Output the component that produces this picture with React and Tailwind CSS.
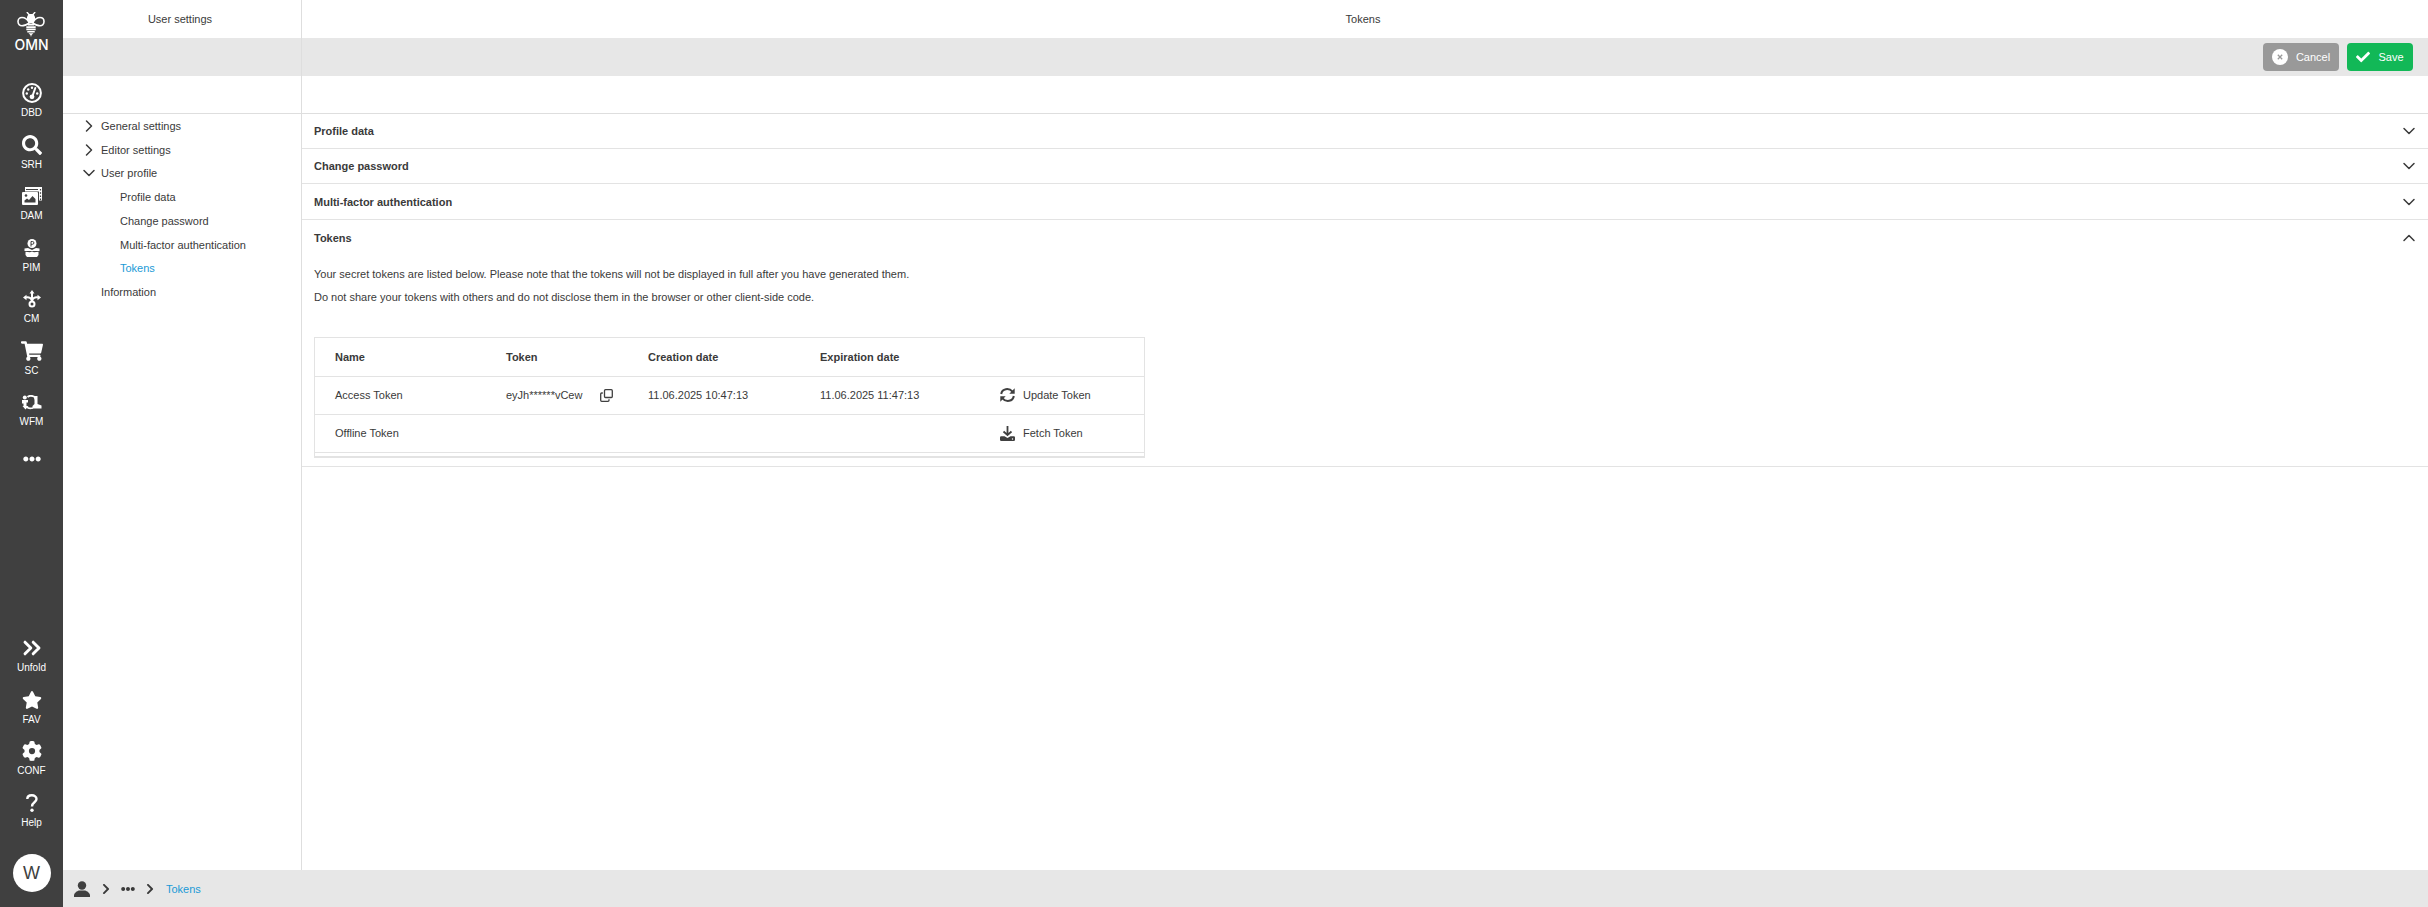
import React from "react";
import {
  FaCheck,
  FaChevronRight,
  FaEllipsisH,
  FaSearch,
  FaShoppingCart,
  FaStar,
} from "react-icons/fa";
import { FaGear } from "react-icons/fa6";
import { ChevronDown, ChevronRight, ChevronUp, ChevronsRight } from "lucide-react";

const BeeLogo = () => (
  <svg viewBox="0 0 28 25" className="h-[25px] w-7" fill="none" stroke="white">
    <path d="M10.200 0.600 L12 2.500 M17.800 0.600 L16 2.500" strokeWidth="1.400" strokeLinecap="round" />
    <path d="M11.500 2 h5 l1.500 3 v3 l-2 3.500 h-4 l-2 -3.500 v-3z" fill="white" stroke="none" />
    <path d="M12.500 11 C10 6.500 7.500 5.500 5 5.500 C2.500 5.500 1 7.300 1 9.600 C1 12 2.800 13.800 5 13.800 C7.500 13.800 10 12.500 12.500 11" strokeWidth="1.600" />
    <path d="M15.500 11 C18 6.500 20.500 5.500 23 5.500 C25.500 5.500 27 7.300 27 9.600 C27 12 25.200 13.800 23 13.800 C20.500 13.800 18 12.500 15.500 11" strokeWidth="1.600" />
    <path d="M10.800 12.800 h6.400 M9.300 15.100 h9.400 M9.300 17.400 h9.400 M10.300 19.700 h7.400" strokeWidth="1.600" />
    <path d="M11.500 21.200 h5 L14.600 23 L14 25 L13.400 23z" fill="white" stroke="none" />
  </svg>
);

const DashboardIcon = () => (
  <svg viewBox="0 0 20 20" className="size-5" fill="white">
    <circle cx="10" cy="10" r="8.900" fill="none" stroke="white" strokeWidth="2" />
    <circle cx="4.800" cy="10.500" r="1.200" />
    <circle cx="6.200" cy="6.500" r="1.200" />
    <circle cx="10" cy="4.700" r="1.200" />
    <circle cx="15.200" cy="10.500" r="1.200" />
    <path d="M13.300 5 L10.500 13" stroke="white" strokeWidth="2" strokeLinecap="round" />
    <circle cx="10" cy="13.800" r="2.400" />
  </svg>
);

const AssetsIcon = () => (
  <svg viewBox="0 0 20 18" className="h-[18px] w-5">
    <path d="M3 0 H20 V13.500 H17 V4.500 H3z" fill="white" />
    <path d="M18.500 2 V13" stroke="#404040" strokeWidth="1.200" strokeDasharray="1.500 1.700" />
    <path d="M4 2.500 H16" stroke="#404040" strokeWidth="1" />
    <rect y="5" width="16" height="13" rx="1" fill="white" />
    <circle cx="4" cy="8.500" r="1.300" fill="#404040" />
    <path d="M2.500 15.500 V13.500 L5 11.500 L7 13 L10.500 9 L13.500 12 V15.500z" fill="#404040" />
  </svg>
);

const ProductIcon = () => (
  <svg viewBox="0 0 16 18" className="h-[18px] w-4">
    <circle cx="8" cy="4.500" r="4.500" fill="white" />
    <path d="M7 7.500 V2.500 H8.500 a1.300 1.300 0 0 1 0 2.800 H7" fill="none" stroke="#404040" strokeWidth="1" />
    <path d="M0.500 9.500 L4 9 L8 11 L12 9 L15.500 9.500 V12 H0.500z" fill="white" />
    <path d="M1.500 12.800 L6 13.300 L8 12.500 L10 13.300 L14.500 12.800 V16 L13 18 H3 L1.500 16z" fill="white" />
  </svg>
);

const ChannelIcon = () => (
  <svg viewBox="0 0 18 18" className="size-[18px]" fill="none" stroke="white" strokeWidth="2">
    <path d="M9 3 V11" />
    <path d="M3 7.500 C6 6.500 8.500 8.500 9 11 C9.500 8.500 12 6.500 15 7.500" />
    <circle cx="9" cy="14" r="2.500" />
    <path d="M9 0 L11.500 3.500 H6.500z M0 7.500 L3.500 4.800 V10.200z M18 7.500 L14.500 4.800 V10.200z" fill="white" stroke="none" />
  </svg>
);

const WorkflowIcon = () => (
  <svg viewBox="0 0 20 15" className="h-[15px] w-5">
    <g fill="white">
      <circle cx="2.800" cy="2.500" r="2" />
      <path d="M0 5 H6 V7.500 H4.500 V11 H6.500 L3.500 14.500 L0.500 11 H1.500 V8.500 H0z" />
      <path d="M11.500 1 H15.500 V9 L19.500 10.500 V13.500 H10.500 V11 L12.500 9 V5z" />
    </g>
    <path d="M5.500 2 C7 0.700 10 0.500 12.500 1.800 M5 12 C6 13.500 8 13.800 11 13" fill="none" stroke="white" strokeWidth="1.800" />
  </svg>
);

const HelpIcon = () => (
  <svg viewBox="0 0 12 18" className="h-[18px] w-3" fill="none" stroke="white" strokeWidth="2.400">
    <path d="M1.300 5 C1.300 2.500 3.300 1.300 5.800 1.300 C8.500 1.300 10.500 2.800 10.500 5 C10.500 8.500 6 8 6 12.500" />
    <circle cx="6" cy="16.200" r="1.700" fill="white" stroke="none" />
  </svg>
);

const CancelIcon = () => (
  <svg viewBox="0 0 16 16" className="size-4">
    <circle cx="8" cy="8" r="8" fill="white" />
    <path d="M5.800 5.800 L10.200 10.200 M10.200 5.800 L5.800 10.200" stroke="#999999" strokeWidth="1.300" />
  </svg>
);

const CopyIcon = () => (
  <svg viewBox="0 0 13 13" className="size-[13px]" fill="none" stroke="#404040" strokeWidth="1.300">
    <rect x="4.500" y="0.700" width="7.800" height="7.800" rx="1" />
    <path d="M2.800 4 H1.700 a1 1 0 0 0 -1 1 V11.300 a1 1 0 0 0 1 1 H8 a1 1 0 0 0 1 -1 V10.200" />
  </svg>
);

const UpdateIcon = () => (
  <svg viewBox="0 0 15 14" className="h-3.5 w-[15px]" fill="none" stroke="#404040" strokeWidth="2">
    <path d="M1.200 6 C2 0.500 9 -0.500 12.500 3.700" />
    <path d="M13.800 8 C13 13.500 6 14.500 2.500 10.300" />
    <path d="M14.700 0.300 V5.700 H9.300z M0.300 13.700 V8.300 H5.700z" fill="#404040" stroke="none" />
  </svg>
);

const FetchIcon = () => (
  <svg viewBox="0 0 15 15" className="size-[15px]">
    <path d="M7.500 0 V8.500 M3.500 5.500 L7.500 9 L11.500 5.500" fill="none" stroke="#404040" strokeWidth="1.800" />
    <path d="M0 11.500 a1.200 1.200 0 0 1 1.200 -1.200 H4.500 L7.500 12 L10.500 10.300 H13.800 a1.200 1.200 0 0 1 1.200 1.200 V13.800 a1.200 1.200 0 0 1 -1.200 1.200 H1.200 a1.200 1.200 0 0 1 -1.200 -1.200z" fill="#404040" />
    <circle cx="12.500" cy="13" r="0.700" fill="white" />
  </svg>
);

const UserIcon = () => (
  <svg viewBox="0 0 16 16" className="size-4" fill="#404040">
    <circle cx="8" cy="4.500" r="4.200" />
    <path d="M0 16 V14 C1 10.800 4 9.800 5.500 9.600 H10.500 C12 9.800 15 10.800 16 14 V16z" />
  </svg>
);

const modules = [
  { label: "DBD", icon: <DashboardIcon /> },
  { label: "SRH", icon: <FaSearch className="size-5" /> },
  { label: "DAM", icon: <AssetsIcon /> },
  { label: "PIM", icon: <ProductIcon /> },
  { label: "CM", icon: <ChannelIcon /> },
  { label: "SC", icon: <FaShoppingCart className="h-5 w-[22px]" /> },
  { label: "WFM", icon: <WorkflowIcon /> },
];

const tools = [
  { label: "Unfold", icon: <ChevronsRight className="size-7" strokeWidth={2.5} /> },
  { label: "FAV", icon: <FaStar className="size-5" /> },
  { label: "CONF", icon: <FaGear className="size-5" /> },
  { label: "Help", icon: <HelpIcon /> },
];

const RailButton = ({ label, icon }) => (
  <button type="button" className="flex w-full flex-col items-center text-white">
    <span className="flex h-6 w-7 items-center justify-center">{icon}</span>
    <span className="mt-0.5 text-[10px] leading-3">{label}</span>
  </button>
);

const Rail = () => (
  <aside className="flex w-[63px] shrink-0 flex-col items-center bg-[#404040] text-white">
    <a href="#" className="mt-3 flex flex-col items-center">
      <BeeLogo />
      <span className="font-['Inter',sans-serif] text-sm leading-4 font-medium">OMN</span>
    </a>
    <nav className="mt-7 grid h-[361px] w-full grid-rows-7">
      {modules.map((item) => (
        <RailButton key={item.label} {...item} />
      ))}
    </nav>
    <button type="button" aria-label="More modules" className="mt-2">
      <FaEllipsisH className="size-[18px]" />
    </button>
    <nav className="mt-auto grid h-[206px] w-full grid-rows-4">
      {tools.map((item) => (
        <RailButton key={item.label} {...item} />
      ))}
    </nav>
    <button
      type="button"
      className="mt-3 mb-[15px] size-[38px] rounded-full bg-white text-lg text-[#404040]"
    >
      W
    </button>
  </aside>
);

const TreeItem = ({ label, icon }) => (
  <button type="button" className="flex items-center text-left">
    <span className="flex w-6 justify-center">{icon}</span>
    {label}
  </button>
);

const SettingsTree = () => (
  <nav className="grid h-[190px] grid-rows-8 pl-[14px]">
    <TreeItem label="General settings" icon={<ChevronRight className="size-5" strokeWidth={1.8} />} />
    <TreeItem label="Editor settings" icon={<ChevronRight className="size-5" strokeWidth={1.8} />} />
    <TreeItem label="User profile" icon={<ChevronDown className="size-5" strokeWidth={1.8} />} />
    <a href="#profile" className="flex items-center pl-[43px]">Profile data</a>
    <a href="#password" className="flex items-center pl-[43px]">Change password</a>
    <a href="#mfa" className="flex items-center pl-[43px]">Multi-factor authentication</a>
    <a href="#tokens" className="flex items-center pl-[43px] text-[#1b9ad6]">Tokens</a>
    <a href="#information" className="flex items-center pl-6">Information</a>
  </nav>
);

const SectionHeader = ({ title, open }) => (
  <button
    type="button"
    aria-expanded={open}
    className="flex h-[35px] w-full items-center justify-between pr-[9px] pl-3 font-bold"
  >
    {title}
    {open ? (
      <ChevronUp className="size-5" strokeWidth={1.8} />
    ) : (
      <ChevronDown className="size-5" strokeWidth={1.8} />
    )}
  </button>
);

const TokenTable = () => (
  <div className="mt-7 ml-3 w-[831px] border border-b-2 border-[#e3e3e3] pb-[3px]">
    <table className="w-full table-fixed border-collapse text-left">
      <colgroup>
        <col className="w-[191px]" />
        <col className="w-[142px]" />
        <col className="w-[172px]" />
        <col className="w-[180px]" />
        <col />
      </colgroup>
      <thead>
        <tr className="h-[38px] border-b border-[#e3e3e3]">
          <th className="pl-5">Name</th>
          <th>Token</th>
          <th>Creation date</th>
          <th>Expiration date</th>
          <td></td>
        </tr>
      </thead>
      <tbody>
        <tr className="h-[38px] border-b border-[#e3e3e3]">
          <td className="pl-5">Access Token</td>
          <td>
            <span className="flex items-center gap-[18px]">
              eyJh******vCew
              <button type="button" aria-label="Copy token">
                <CopyIcon />
              </button>
            </span>
          </td>
          <td>11.06.2025 10:47:13</td>
          <td>11.06.2025 11:47:13</td>
          <td>
            <button type="button" className="flex items-center gap-2">
              <UpdateIcon />
              Update Token
            </button>
          </td>
        </tr>
        <tr className="h-[38px] border-b border-[#e3e3e3]">
          <td className="pl-5">Offline Token</td>
          <td></td>
          <td></td>
          <td></td>
          <td>
            <button type="button" className="flex items-center gap-2">
              <FetchIcon />
              Fetch Token
            </button>
          </td>
        </tr>
      </tbody>
    </table>
  </div>
);

const App = () => {
  return (
    <div className="flex min-h-screen bg-white font-['Liberation_Sans',Arial,sans-serif] text-[11px] leading-4 text-[#3a3a3a]">
      <Rail />
      <div className="flex min-w-0 flex-1 flex-col">
        <div className="flex flex-1">
          <section className="flex w-[239px] shrink-0 flex-col border-r border-[#dedede]">
            <h2 className="flex h-[38px] items-center justify-center pr-1">User settings</h2>
            <div className="h-[38px] bg-[#e7e7e7]"></div>
            <div className="h-[38px] border-b border-[#dedede]"></div>
            <SettingsTree />
          </section>
          <main className="min-w-0 flex-1">
            <h1 className="flex h-[38px] items-center justify-center pr-1">Tokens</h1>
            <div className="flex h-[38px] items-center justify-end gap-2 bg-[#e7e7e7] pr-[15px] text-white">
              <button
                type="button"
                className="flex h-7 w-[76px] items-center justify-center gap-2 rounded bg-[#999999]"
              >
                <CancelIcon />
                Cancel
              </button>
              <button
                type="button"
                className="flex h-7 w-[66px] items-center justify-center gap-2 rounded bg-[#12b857]"
              >
                <FaCheck className="size-[14px]" />
                Save
              </button>
            </div>
            <div className="h-[38px] border-b border-[#dedede]"></div>
            <div className="grid h-[106px] grid-rows-3 divide-y divide-[#e3e3e3] border-b border-[#e3e3e3]">
              <SectionHeader title="Profile data" />
              <SectionHeader title="Change password" />
              <SectionHeader title="Multi-factor authentication" />
            </div>
            <div className="border-b border-[#e3e3e3] pb-2">
              <SectionHeader title="Tokens" open />
              <div className="mt-2 pl-3 leading-[23px]">
                <p>
                  Your secret tokens are listed below. Please note that the tokens will not be
                  displayed in full after you have generated them.
                </p>
                <p>
                  Do not share your tokens with others and do not disclose them in the browser or
                  other client-side code.
                </p>
              </div>
              <TokenTable />
            </div>
          </main>
        </div>
        <footer className="flex h-[37px] items-center bg-[#e7e7e7] pl-[11px]">
          <UserIcon />
          <FaChevronRight className="ml-3 h-3 w-2" />
          <button type="button" aria-label="Show path" className="mx-[11px]">
            <FaEllipsisH className="size-3.5" />
          </button>
          <FaChevronRight className="h-3 w-2" />
          <a href="#tokens" className="ml-3 text-[#1b9ad6]">
            Tokens
          </a>
        </footer>
      </div>
    </div>
  );
};

export default App;
